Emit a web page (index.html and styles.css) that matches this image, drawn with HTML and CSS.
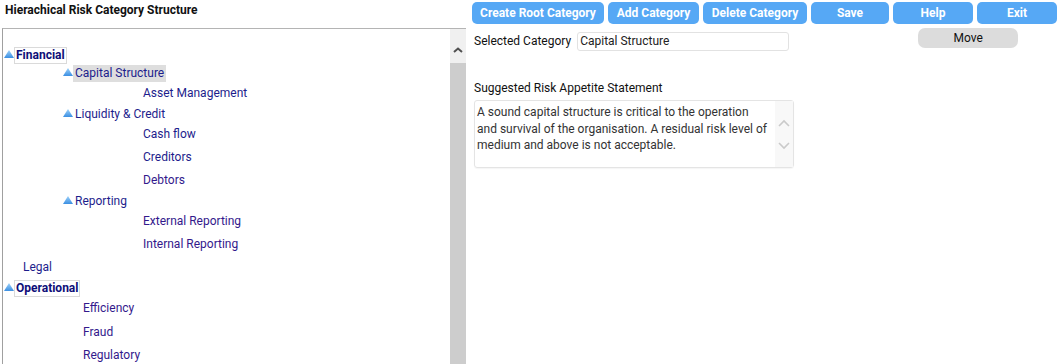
FILE: index.html
```html
<!DOCTYPE html>
<html lang="en">
<head>
    <meta charset="UTF-8" />
    <title>Hierachical Risk Category Structure</title>
    <link rel="stylesheet" href="styles.css">
</head>
<body>
<div class="header">
    <h1 class="title">Hierachical Risk Category Structure</h1>
    <div class="toolbar">
        <button class="btn btn-create">Create Root Category</button>
        <button class="btn btn-add">Add Category</button>
        <button class="btn btn-delete">Delete Category</button>
        <button class="btn btn-save">Save</button>
        <button class="btn btn-small">Help</button>
        <button class="btn btn-small">Exit</button>
    </div>
</div>

<div class="main">
    <div class="tree-panel">
        <div class="tree">
            <div class="node parent lvl0">
                <svg class="arrow" width="10" height="8" viewBox="0 0 10 8"><defs><linearGradient id="g1" x1="0" y1="0" x2="0" y2="1"><stop offset="0" stop-color="#9fd3fb"/><stop offset="1" stop-color="#3b8fe2"/></linearGradient></defs><polygon points="5,0 10,8 0,8" fill="url(#g1)"/></svg>
                <span class="label root boxed">Financial</span>
            </div>
            <div class="node parent lvl1">
                <svg class="arrow" width="10" height="8" viewBox="0 0 10 8"><polygon points="5,0 10,8 0,8" fill="url(#g1)"/></svg>
                <span class="label selected">Capital Structure</span>
            </div>
            <div class="node leaf lvl2"><span class="label">Asset Management</span></div>
            <div class="node parent lvl1">
                <svg class="arrow" width="10" height="8" viewBox="0 0 10 8"><polygon points="5,0 10,8 0,8" fill="url(#g1)"/></svg>
                <span class="label">Liquidity &amp; Credit</span>
            </div>
            <div class="node leaf lvl2"><span class="label">Cash flow</span></div>
            <div class="node leaf lvl2"><span class="label">Creditors</span></div>
            <div class="node leaf lvl2"><span class="label visited">Debtors</span></div>
            <div class="node parent lvl1">
                <svg class="arrow" width="10" height="8" viewBox="0 0 10 8"><polygon points="5,0 10,8 0,8" fill="url(#g1)"/></svg>
                <span class="label">Reporting</span>
            </div>
            <div class="node leaf lvl2"><span class="label visited">External Reporting</span></div>
            <div class="node leaf lvl2"><span class="label visited">Internal Reporting</span></div>
            <div class="node leaf lvl-root-leaf"><span class="label">Legal</span></div>
            <div class="node parent lvl0">
                <svg class="arrow" width="10" height="8" viewBox="0 0 10 8"><polygon points="5,0 10,8 0,8" fill="url(#g1)"/></svg>
                <span class="label root boxed">Operational</span>
            </div>
            <div class="node leaf lvl1-leaf"><span class="label visited">Efficiency</span></div>
            <div class="node leaf lvl1-leaf"><span class="label visited">Fraud</span></div>
            <div class="node leaf lvl1-leaf"><span class="label visited">Regulatory</span></div>
        </div>
        <div class="scrollbar">
            <div class="scroll-up">
                <svg width="10" height="6" viewBox="0 0 10 6"><polyline points="1,5 5,1.5 9,5" fill="none" stroke="#505050" stroke-width="2"/></svg>
            </div>
            <div class="scroll-thumb"></div>
        </div>
    </div>

    <div class="details">
        <div class="selected-row">
            <label class="field-label">Selected Category</label>
            <div class="input">Capital Structure</div>
            <button class="btn-move">Move</button>
        </div>
        <div class="statement">
            <label class="field-label">Suggested Risk Appetite Statement</label>
            <div class="textarea">
                <div class="textarea-text">A sound capital structure is critical to the operation<br>and survival of the organisation. A residual risk level of<br>medium and above is not acceptable.</div>
                <div class="textarea-scroll">
                    <svg width="12" height="8" viewBox="0 0 12 8"><polyline points="1,7 6,2 11,7" fill="none" stroke="#cacaca" stroke-width="1.6"/></svg>
                    <svg width="12" height="8" viewBox="0 0 12 8"><polyline points="1,1 6,6 11,1" fill="none" stroke="#cacaca" stroke-width="1.6"/></svg>
                </div>
            </div>
        </div>
    </div>
</div>
</body>
</html>
```
FILE: styles.css
```css
body {
    font-family: Roboto, 'Segoe UI', sans-serif;
    font-size: 12px;
    margin: 0;
    padding: 0;
    background: #fff;
    color: #222;
    overflow: hidden;
}

.header {
    display: flex;
    height: 28px;
}

.title {
    width: 472px;
    box-sizing: border-box;
    margin: 0;
    padding-left: 5px;
    font-size: 12px;
    font-weight: bold;
    line-height: 20px;
    color: #111;
}

.toolbar {
    display: flex;
    gap: 4px;
    margin-top: 2px;
}

.btn {
    height: 22px;
    padding: 0;
    border: none;
    border-radius: 5px;
    background-color: #56a8f5;
    color: #fff;
    font-family: inherit;
    font-size: 12px;
    font-weight: bold;
}

.btn-create { width: 132px; }
.btn-add { width: 91px; }
.btn-delete { width: 104px; }
.btn-save { width: 78px; }
.btn-small { width: 80px; }

.main {
    display: flex;
}

/* tree view */
.tree-panel {
    display: flex;
    margin-left: 2px;
    width: 464px;
    height: 340px;
    box-sizing: border-box;
    border-top: 1px solid #b4b4b4;
    border-left: 1px solid #a0a0a0;
    overflow: hidden;
}

.tree {
    flex: 1;
    padding-top: 17px;
}

.node {
    display: flex;
    align-items: center;
}

.node.parent { height: 18px; }
.node.leaf { height: 23px; }
.lvl1-leaf.leaf { height: 23.5px; }

.lvl0 { padding-left: 1px; }
.lvl1 { padding-left: 60px; }
.lvl2 { padding-left: 138px; }
.lvl-root-leaf { padding-left: 18px; }
.lvl1-leaf { padding-left: 78px; }

.arrow {
    display: block;
    margin-bottom: 3px;
}

.label {
    padding: 0 1px;
    border: 1px solid transparent;
    line-height: 15px;
    color: #1d1d8c;
    white-space: nowrap;
}

.label.visited { color: #33198c; }

.label.root {
    font-weight: bold;
    color: #0e0e78;
}

.label.boxed {
    border-color: #dadada;
}

.label.selected {
    background-color: #dedede;
}

.scrollbar {
    width: 16px;
    display: flex;
    flex-direction: column;
}

.scroll-up {
    height: 34px;
    background: #f0f0f0;
    display: flex;
    justify-content: center;
    padding-top: 18px;
    box-sizing: border-box;
}

.scroll-up svg { display: block; }

.scroll-thumb {
    flex: 1;
    background: #cdcdcd;
}

/* details */
.details {
    margin-left: 8px;
    display: flex;
    flex-direction: column;
}

.selected-row {
    display: flex;
    align-items: flex-start;
}

.field-label {
    line-height: 19px;
    color: #111;
    white-space: nowrap;
}

.selected-row .field-label {
    margin-top: 4px;
}

.input {
    margin-top: 4px;
    margin-left: 6px;
    width: 212px;
    height: 19px;
    box-sizing: border-box;
    padding-left: 2px;
    border: 1px solid #e2e2e2;
    border-radius: 3px;
    line-height: 17px;
    color: #222;
}

.btn-move {
    margin-left: 129px;
    width: 100px;
    height: 20px;
    padding: 0;
    border: none;
    border-radius: 7px;
    background: #dcdcdc;
    color: #111;
    font-family: inherit;
    font-size: 12px;
}

.statement {
    margin-top: 29px;
    display: flex;
    flex-direction: column;
}

.statement .field-label {
    line-height: 16px;
}

.textarea {
    margin-top: 4px;
    width: 320px;
    height: 68px;
    box-sizing: border-box;
    display: flex;
    border: 1px solid #e4e4e4;
    border-radius: 3px;
    box-shadow: 0 1px 1px rgba(0, 0, 0, 0.04);
}

.textarea-text {
    flex: 1;
    padding: 3px 0 0 2px;
    line-height: 16.5px;
    color: #333;
    white-space: nowrap;
}

.textarea-scroll {
    width: 18px;
    background: #f8f8f8;
    display: flex;
    flex-direction: column;
    align-items: center;
    padding-top: 18px;
    gap: 15px;
}

.textarea-scroll svg { display: block; }
```
